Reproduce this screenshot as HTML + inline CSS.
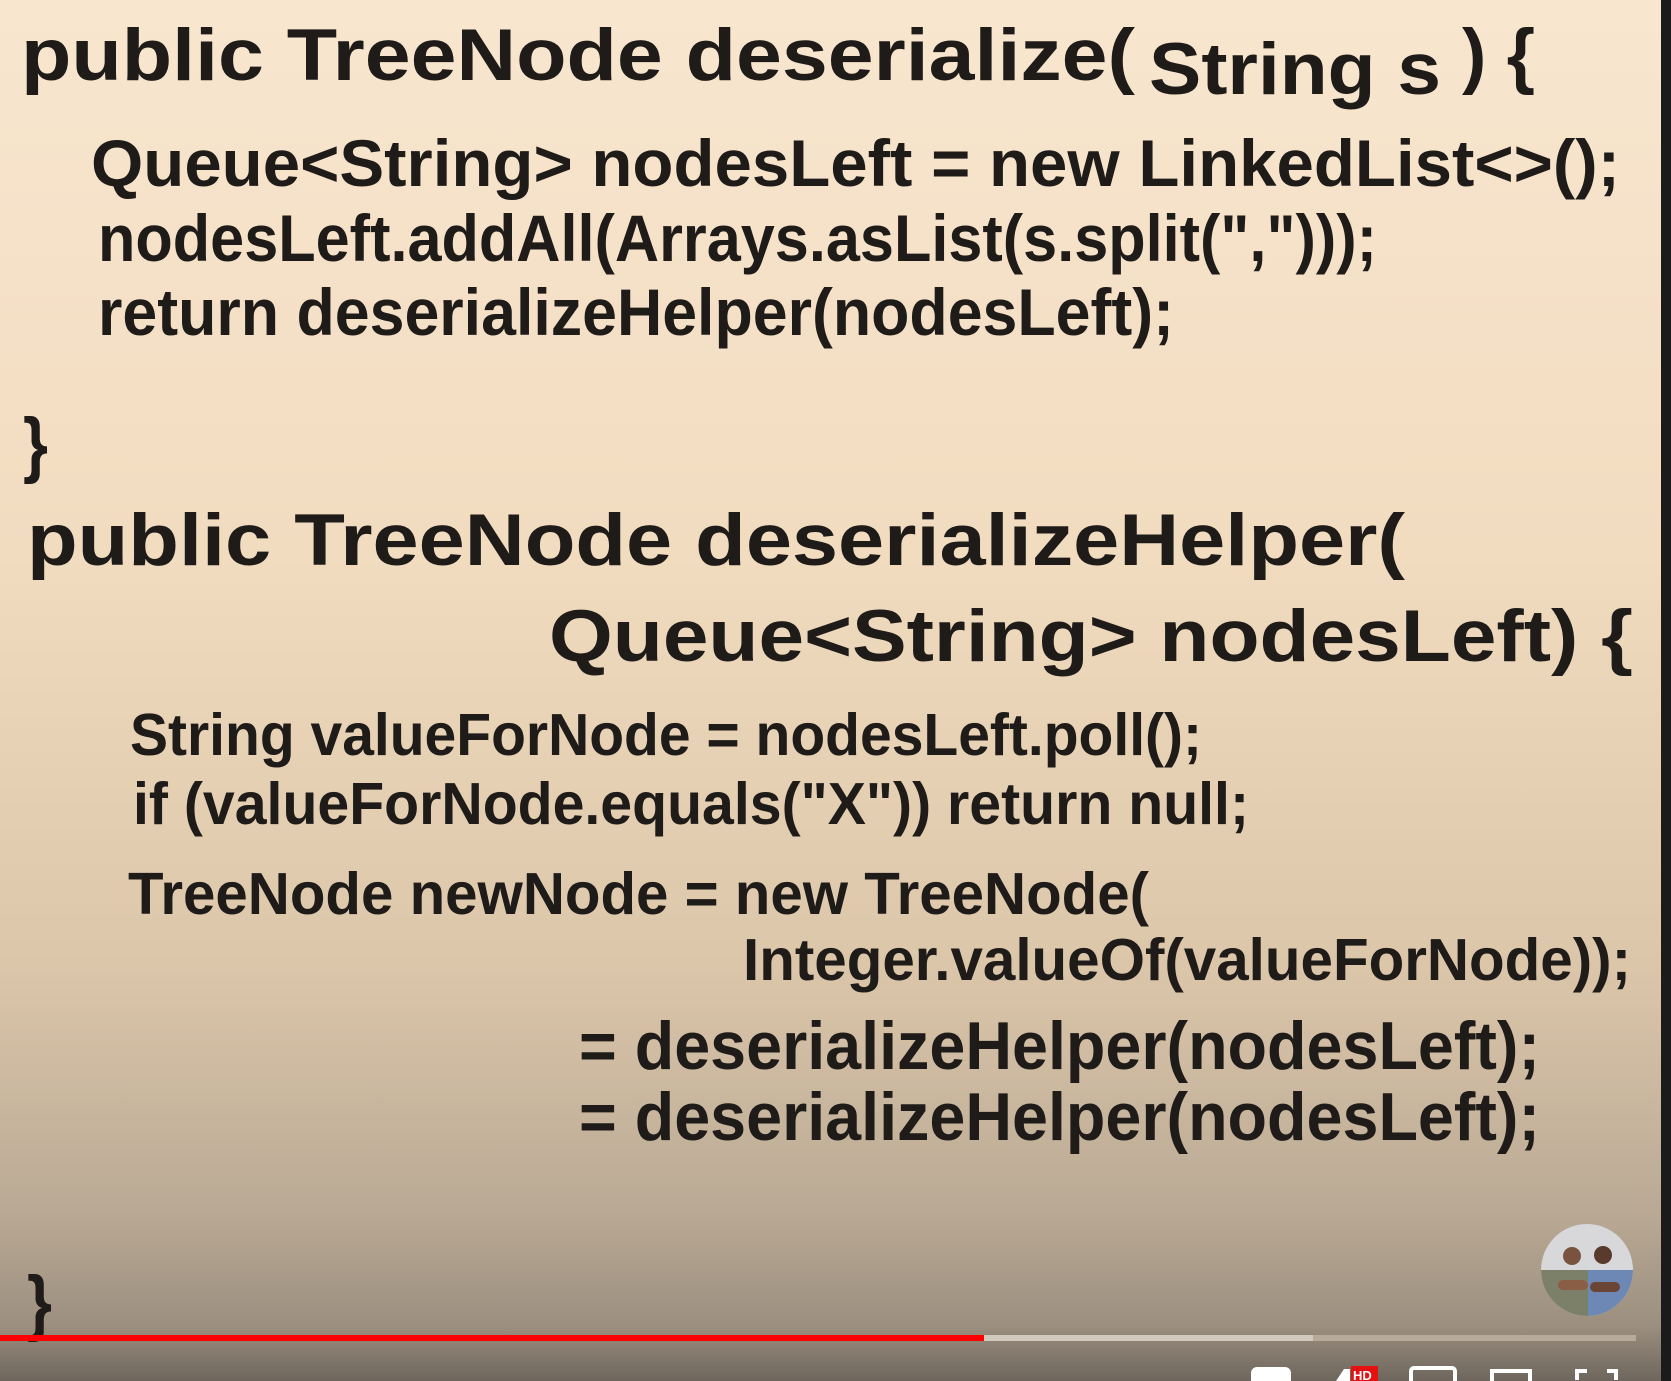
<!DOCTYPE html>
<html><head><meta charset="utf-8"><style>
html,body{margin:0;padding:0;width:1671px;height:1381px;overflow:hidden;background:#1b1b1b}
svg{display:block}
text{font-family:"Liberation Sans",sans-serif;font-weight:bold;fill:#1e1b19}
</style></head><body>
<svg width="1671" height="1381" viewBox="0 0 1671 1381" xmlns="http://www.w3.org/2000/svg">
<defs>
<linearGradient id="bg" x1="0" y1="0" x2="0" y2="1">
<stop offset="0" stop-color="#f8e6cf"/>
<stop offset="0.4" stop-color="#f2dcc0"/>
<stop offset="0.7" stop-color="#dcc6aa"/>
<stop offset="0.88" stop-color="#b9a994"/>
<stop offset="0.96" stop-color="#9c8f7f"/>
<stop offset="1" stop-color="#6e665d"/>
</linearGradient>
<clipPath id="av"><circle cx="1587" cy="1270" r="46"/></clipPath>
</defs>
<rect x="0" y="0" width="1661" height="1381" fill="url(#bg)"/>
<rect x="1661" y="0" width="10" height="1381" fill="#1b1b1b"/>

<text x="21" y="80" font-size="73" textLength="1114" lengthAdjust="spacingAndGlyphs">public TreeNode deserialize(</text>
<text x="1149" y="94" font-size="73" textLength="292" lengthAdjust="spacingAndGlyphs">String s</text>
<text x="1462" y="80" font-size="73" textLength="73" lengthAdjust="spacingAndGlyphs">) {</text>

<text x="91" y="186" font-size="66" textLength="1529" lengthAdjust="spacingAndGlyphs">Queue&lt;String&gt; nodesLeft = new LinkedList&lt;&gt;();</text>
<text x="98" y="261" font-size="66" textLength="1279" lengthAdjust="spacingAndGlyphs">nodesLeft.addAll(Arrays.asList(s.split(",")));</text>
<text x="98" y="335" font-size="66" textLength="1076" lengthAdjust="spacingAndGlyphs">return deserializeHelper(nodesLeft);</text>

<text x="23" y="469" font-size="73" textLength="25" lengthAdjust="spacingAndGlyphs">}</text>

<text x="27" y="565" font-size="73" textLength="1378" lengthAdjust="spacingAndGlyphs">public TreeNode deserializeHelper(</text>
<text x="549" y="661" font-size="73" textLength="1084" lengthAdjust="spacingAndGlyphs">Queue&lt;String&gt; nodesLeft) {</text>

<text x="130" y="755" font-size="59" textLength="1072" lengthAdjust="spacingAndGlyphs">String valueForNode = nodesLeft.poll();</text>
<text x="133" y="824" font-size="59" textLength="1116" lengthAdjust="spacingAndGlyphs">if (valueForNode.equals("X")) return null;</text>
<text x="128" y="914" font-size="59" textLength="1021" lengthAdjust="spacingAndGlyphs">TreeNode newNode = new TreeNode(</text>
<text x="743" y="980" font-size="59" textLength="888" lengthAdjust="spacingAndGlyphs">Integer.valueOf(valueForNode));</text>

<text x="579" y="1069" font-size="68" textLength="961" lengthAdjust="spacingAndGlyphs">= deserializeHelper(nodesLeft);</text>
<text x="579" y="1140" font-size="68" textLength="961" lengthAdjust="spacingAndGlyphs">= deserializeHelper(nodesLeft);</text>

<text x="27" y="1327" font-size="73" textLength="25" lengthAdjust="spacingAndGlyphs">}</text>

<g clip-path="url(#av)">
<rect x="1540" y="1224" width="94" height="94" fill="#d8d8da"/>
<rect x="1541" y="1270" width="47" height="50" fill="#7d8068"/>
<rect x="1588" y="1270" width="46" height="50" fill="#6d88b4"/>
<circle cx="1572" cy="1256" r="9" fill="#7a5340"/>
<circle cx="1603" cy="1255" r="9" fill="#5a3a2c"/>
<rect x="1558" y="1280" width="30" height="10" rx="5" fill="#8a5d45"/>
<rect x="1590" y="1282" width="30" height="10" rx="5" fill="#6a4434"/>
</g>

<rect x="0" y="1335" width="1636" height="6" fill="#b7aa9b"/>
<rect x="984" y="1335" width="329" height="6" fill="#d2c9bf"/>
<rect x="0" y="1335" width="984" height="6" fill="#ff0000"/>

<g fill="none" stroke="#ffffff" stroke-width="4">
<rect x="1253" y="1369" width="36" height="20" rx="4" fill="#fff"/>
<rect x="1411" y="1368" width="44" height="20" rx="3"/>
<rect x="1492" y="1371" width="38" height="20"/>
<path d="M1577 1380 V1371 H1587 M1607 1371 H1616 V1380"/>
</g>
<path d="M1336 1381 l8-12 h6 v12 z" fill="#fff"/>
<rect x="1351" y="1366" width="27" height="15" fill="#e51010"/>
<text x="1353" y="1380" font-size="13" style="fill:#fff">HD</text>
</svg>
</body></html>
